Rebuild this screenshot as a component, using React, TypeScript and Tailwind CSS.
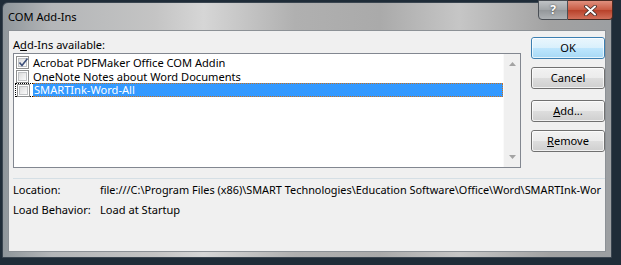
import React from "react";

const font = { fontFamily: '"Noto Sans", "Open Sans", sans-serif' };

function Checkbox({ checked }: { checked?: boolean }) {
  return (
    <div className="w-[13px] h-[13px] border border-[#8e8f8f] bg-white p-[1px] shrink-0">
      <div className="relative w-full h-full border border-[#c0c2c4] bg-gradient-to-br from-[#dcdcdc] to-[#fbfbfb]">
        {checked && (
          <svg className="absolute left-[-1px] top-[-2px]" width="11" height="11" viewBox="0 0 11 11">
            <path d="M1.5 5.5 L4 8.5 L9.5 1.5" fill="none" stroke="#3c4f7a" strokeWidth="1.6" />
          </svg>
        )}
      </div>
    </div>
  );
}

function Btn({ children, primary }: { children: React.ReactNode; primary?: boolean }) {
  return (
    <div
      className={
        "h-[22px] w-[74px] rounded-[3px] border flex items-center justify-center text-black " +
        (primary
          ? "border-[#3c7fb1] bg-[linear-gradient(to_bottom,#eaf6fd_0%,#d9f0fc_50%,#bee6fd_51%,#a7d9f5_100%)]"
          : "border-[#707070] bg-[linear-gradient(to_bottom,#f2f2f2_0%,#ebebeb_50%,#dddddd_51%,#cfcfcf_100%)]")
      }
    >
      <div className="w-[72px] h-[20px] rounded-[2px] border border-white/70 flex items-center justify-center leading-[14px]">
        {children}
      </div>
    </div>
  );
}

export default function App() {
  return (
    <div className="w-[621px] h-[265px] bg-[#1f2c38] overflow-hidden pl-[2px] pt-[2px] text-[11.1px]" style={font}>
      <div className="relative w-[610px] h-[256px] rounded-t-[6px] border border-[#3a4550] bg-[linear-gradient(to_right,#8f969b_0%,#b4b6b8_8%,#c4c4c4_25%,#d6d6d6_33%,#b0b0b0_48%,#aaaaaa_62%,#c6c6c6_75%,#a2a2a2_90%,#9c9fa2_100%)] flex flex-col">
        {/* title bar */}
        <div className="h-[27px] flex items-center pl-[5px] text-black shrink-0 leading-[14px]">COM Add-Ins</div>
        {/* caption buttons */}
        <div className="absolute top-[-3px] right-[-2px] flex h-[20px]">
          <div className="w-[30px] h-full rounded-bl-[4px] border border-[#4a4f55] bg-[linear-gradient(to_bottom,#c0c3c5,#a0a4a7_50%,#93979a_51%,#aeb2b5)] flex items-center justify-center text-[12px] font-bold text-white [text-shadow:0_0_2px_#333]">
            ?
          </div>
          <div className="w-[45px] h-full rounded-br-[4px] border border-l-0 border-[#4a2a22] bg-[linear-gradient(to_bottom,#e0907e,#c85a42_50%,#b8412a_51%,#d2705a)] flex items-center justify-center">
            <svg width="13" height="11" viewBox="0 0 13 11">
              <path d="M2 1.5 L11 9.5 M11 1.5 L2 9.5" stroke="#3a2a26" strokeWidth="3.6" strokeLinecap="round" />
              <path d="M2 1.5 L11 9.5 M11 1.5 L2 9.5" stroke="#ffffff" strokeWidth="2" strokeLinecap="round" />
            </svg>
          </div>
        </div>
        {/* client area */}
        <div className="mx-[5px] h-[222px] bg-[#f0f0f0] border border-[#8c9196] text-black flex flex-col pl-[4px] pt-[5px] overflow-hidden">
          <div className="flex">
            <div className="w-[509px] flex flex-col">
              <div className="h-[17px] leading-[17px]">
                A<span className="underline">d</span>d-Ins available:
              </div>
              <div className="h-[115px] border border-[#828790] bg-white flex">
                <div className="flex-1 flex flex-col pt-[1px] pl-[1px]">
                  <div className="h-[14px] flex items-center pl-[1px]">
                    <Checkbox checked />
                    <span className="ml-[4px] leading-[13px]">Acrobat PDFMaker Office COM Addin</span>
                  </div>
                  <div className="h-[14px] flex items-center pl-[1px]">
                    <Checkbox />
                    <span className="ml-[4px] leading-[13px]">OneNote Notes about Word Documents</span>
                  </div>
                  <div className="h-[14px] flex items-stretch">
                    <div className="flex items-center pl-[1px] pr-[3px] border-y border-l border-dotted border-black">
                      <Checkbox />
                    </div>
                    <div className="flex-1 bg-[#3399ff] text-white flex items-center pl-[1px] border-y border-r border-dotted border-[#c8701e]">
                      <span className="leading-[12px]">SMARTInk-Word-All</span>
                    </div>
                  </div>
                </div>
                <div className="w-[17px] bg-[#f0f0f0] border-l border-[#fafafa] flex flex-col items-center justify-between py-[8px]">
                  <svg width="7" height="4" viewBox="0 0 7 4">
                    <path d="M0 4 L3.5 0 L7 4 Z" fill="#a3a3a3" />
                  </svg>
                  <svg width="7" height="4" viewBox="0 0 7 4">
                    <path d="M0 0 L3.5 4 L7 0 Z" fill="#a3a3a3" />
                  </svg>
                </div>
              </div>
            </div>
            <div className="ml-[10px] pt-[1px] flex flex-col">
              <Btn primary>OK</Btn>
              <div className="h-[8px]" />
              <Btn>Cancel</Btn>
              <div className="h-[11px]" />
              <Btn>
                <span className="underline">A</span>dd...
              </Btn>
              <div className="h-[8px]" />
              <Btn>
                <span className="underline">R</span>emove
              </Btn>
            </div>
          </div>
          <div className="mt-[10px] h-[1px] w-[592px] bg-[#d5dfe5]" />
          <div className="mt-[3px] flex h-[17px] items-center">
            <div className="w-[87px] shrink-0">Location:</div>
            <div className="w-[508px] whitespace-nowrap text-[10.9px]">
              file:///C:\Program Files (x86)\SMART Technologies\Education Software\Office\Word\SMARTInk-Wor
            </div>
          </div>
          <div className="mt-[3px] flex h-[17px] items-center">
            <div className="w-[87px] shrink-0">Load Behavior:</div>
            <div>Load at Startup</div>
          </div>
        </div>
      </div>
    </div>
  );
}
